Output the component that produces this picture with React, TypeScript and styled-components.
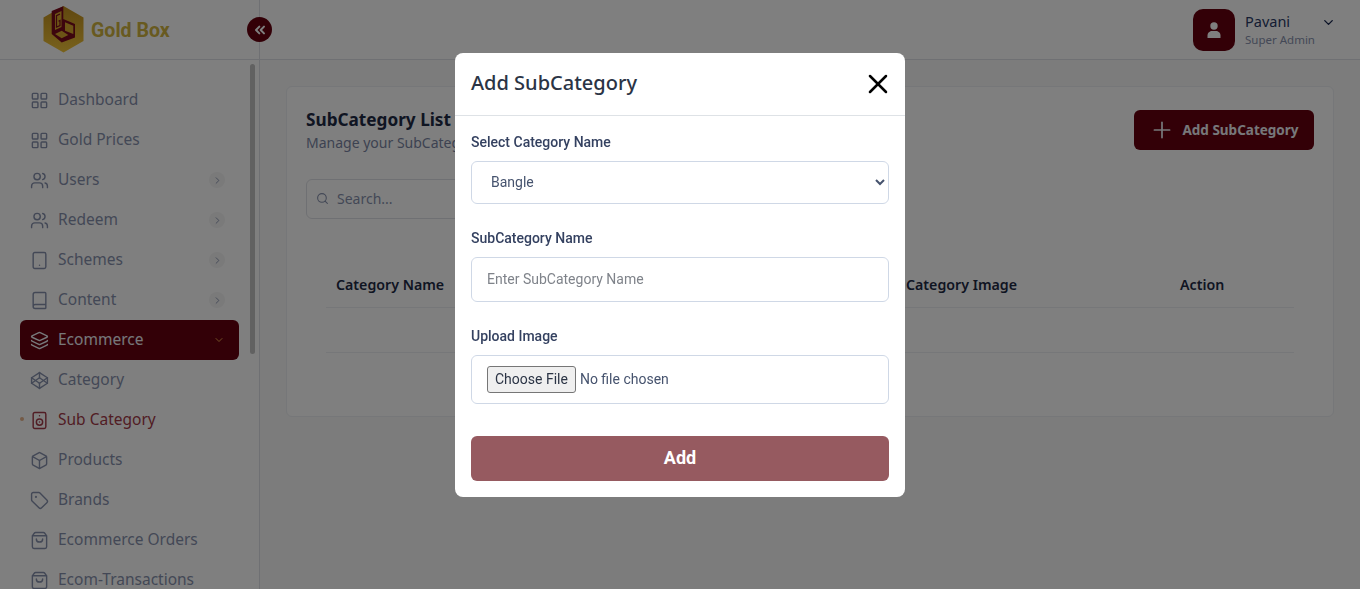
import React from 'react'
import styled, { createGlobalStyle } from 'styled-components'
import {
	Book,
	Box,
	ChevronDown,
	ChevronRight,
	ChevronsLeft,
	Codepen,
	Layers,
	LayoutGrid,
	Plus,
	Search,
	ShoppingBag,
	Speaker,
	Tablet,
	Tag,
	Users,
	X,
} from 'lucide-react'

const MAROON = `#66000f`
const NAV_TEXT = `#8791ad`
const UI_FONT = `"Noto Sans", "Open Sans", sans-serif`

const GlobalStyle = createGlobalStyle`
	html, body {
		margin: 0;
		height: 100%;
		overflow: hidden;
		background: #f8f8f8;
		font-family: ${UI_FONT};
	}
	* {
		box-sizing: border-box;
	}
`

const Page = styled.div`
	display: flex;
	height: 589px;
	overflow: hidden;
`

const Sidebar = styled.aside`
	position: relative;
	width: 260px;
	flex-shrink: 0;
	background: #fff;
	border-right: 1px solid #dfe1e6;
	display: flex;
	flex-direction: column;
`

const Brand = styled.div`
	height: 60px;
	flex-shrink: 0;
	display: flex;
	align-items: center;
	gap: 7px;
	padding-left: 43px;
	border-bottom: 1px solid #dfe1e6;
`

const BrandName = styled.span`
	margin-top: 2px;
	font-family: Roboto, sans-serif;
	font-size: 19.6px;
	font-weight: 700;
	color: #d0b440;
`

const CollapseButton = styled.button`
	position: absolute;
	top: 17px;
	left: 247px;
	width: 25px;
	height: 25px;
	padding: 0;
	border: none;
	border-radius: 50%;
	background: ${MAROON};
	color: #fff;
	display: flex;
	align-items: center;
	justify-content: center;
	z-index: 2;
`

const ScrollThumb = styled.div`
	position: absolute;
	top: 64px;
	left: 250px;
	width: 5px;
	height: 290px;
	border-radius: 3px;
	background: #c2c2c2;
`

const Nav = styled.nav`
	display: flex;
	flex-direction: column;
	padding: 20px 20px 0;
	overflow: hidden;
`

const NavItem = styled.div<{ $active?: boolean; $current?: boolean }>`
	position: relative;
	height: 40px;
	flex-shrink: 0;
	width: 219px;
	display: flex;
	align-items: center;
	gap: 9px;
	padding: 0 14px 0 10px;
	border-radius: 6px;
	font-size: 15.5px;
	background: ${({ $active }): string => ($active ? MAROON : `transparent`)};
	color: ${({ $active, $current }): string => ($active ? `#eef0f5` : $current ? `#a33a48` : NAV_TEXT)};

	${({ $current }): string =>
		$current
			? `&::before {
		content: '';
		position: absolute;
		left: 0;
		top: 17px;
		width: 4px;
		height: 4px;
		border-radius: 50%;
		background: #e8b48c;
	}`
			: ``}
`

const NavLabel = styled.span`
	flex: 1;
	margin-bottom: 2px;
	white-space: nowrap;
`

const NavArrow = styled.span`
	width: 16px;
	height: 16px;
	border-radius: 50%;
	background: #f4f4f4;
	color: ${NAV_TEXT};
	display: flex;
	align-items: center;
	justify-content: center;
`

const Main = styled.div`
	flex: 1;
	min-width: 0;
	display: flex;
	flex-direction: column;
`

const TopBar = styled.header`
	height: 60px;
	flex-shrink: 0;
	background: #fff;
	border-bottom: 1px solid #dfe1e6;
	display: flex;
	justify-content: flex-end;
	align-items: center;
	padding: 0 24px 0 0;
`

const Avatar = styled.div`
	width: 42px;
	height: 42px;
	border-radius: 10px;
	background: ${MAROON};
	display: flex;
	align-items: center;
	justify-content: center;
`

const UserInfo = styled.div`
	margin-left: 10px;
	width: 76px;
	display: flex;
	flex-direction: column;
`

const UserName = styled.span`
	font-size: 14.5px;
	line-height: 19px;
	color: #2a3a66;
`

const UserRole = styled.span`
	font-size: 11.5px;
	line-height: 16px;
	margin-top: 1px;
	color: #8791ad;
	white-space: nowrap;
`

const UserCaret = styled.span`
	align-self: flex-start;
	margin-top: 15px;
	color: #17264f;
	display: flex;
`

const Content = styled.main`
	padding: 26px;
`

const Card = styled.section`
	height: 331px;
	background: #fff;
	border: 1px solid #eceef2;
	border-radius: 6px;
	padding: 23px 19px 0 19px;
`

const CardHead = styled.div`
	display: flex;
	justify-content: space-between;
	align-items: flex-start;
`

const CardTitle = styled.h2`
	margin: 0;
	font-size: 17.2px;
	line-height: 20px;
	font-weight: 700;
	color: #1e2a45;
`

const CardSubtitle = styled.p`
	margin: 4px 0 0;
	font-size: 14px;
	line-height: 18px;
	color: #7a85a3;
`

const AddButton = styled.button`
	width: 180px;
	height: 40px;
	border: none;
	border-radius: 6px;
	background: ${MAROON};
	color: #eef0f5;
	font-family: ${UI_FONT};
	font-size: 13.5px;
	font-weight: 700;
	display: flex;
	align-items: center;
	justify-content: center;
	gap: 7px;
`

const SearchBox = styled.div`
	margin-top: 27px;
	width: 280px;
	height: 40px;
	border: 1px solid #dfe1e6;
	border-radius: 6px;
	display: flex;
	align-items: center;
	gap: 8px;
	padding: 0 9px 1px;
	font-size: 14px;
	color: #8791ad;
`

const Table = styled.div`
	margin: 43px 20px 0;
`

const TableHead = styled.div`
	height: 46px;
	display: grid;
	grid-template-columns: 285px 285px 274px 1fr;
	align-items: center;
	padding: 0 0 1px 10px;
	font-size: 14.2px;
	font-weight: 600;
	color: #1e2a45;
	border-bottom: 1px solid #eceef2;
`

const TableEmpty = styled.div`
	height: 45px;
	border-bottom: 1px solid #eceef2;
`

const Overlay = styled.div`
	position: fixed;
	inset: 0;
	z-index: 10;
	background: rgba(0, 0, 0, 0.5);
`

const Modal = styled.div`
	position: absolute;
	top: 53px;
	left: 455px;
	width: 450px;
	height: 444px;
	background: #fff;
	border-radius: 8px;
	display: flex;
	flex-direction: column;
`

const ModalHeader = styled.div`
	height: 63px;
	flex-shrink: 0;
	border-bottom: 1px solid #dee2e6;
	display: flex;
	align-items: center;
	justify-content: space-between;
	padding: 0 11px 0 16px;
`

const ModalTitle = styled.h3`
	margin: 0 0 3px;
	font-size: 20px;
	font-weight: 500;
	color: #2b3445;
`

const CloseButton = styled.button`
	padding: 0;
	border: none;
	background: none;
	color: #000;
	display: flex;
`

const Form = styled.form`
	padding: 16px 16px 0;
	display: flex;
	flex-direction: column;
	font-family: Roboto, sans-serif;
`

const Field = styled.div`
	margin-bottom: 24px;
	display: flex;
	flex-direction: column;
`

const Label = styled.label`
	font-size: 14px;
	line-height: 20px;
	font-weight: 500;
	color: #344160;
	margin-bottom: 9px;
`

const Select = styled.select`
	height: 43px;
	padding: 0 15px 2px;
	border: 1px solid #cfd8e6;
	border-radius: 6px;
	background: #fff;
	font-family: Roboto, sans-serif;
	font-size: 14px;
	color: #46536e;
`

const TextInput = styled.input`
	height: 45px;
	padding: 0 15px 2px;
	border: 1px solid #cfd8e6;
	border-radius: 6px;
	font-family: Roboto, sans-serif;
	font-size: 14px;

	&::placeholder {
		color: #7f838a;
	}
`

const FileInput = styled.input`
	height: 49px;
	padding: 10px 15px;
	border: 1px solid #cfd8e6;
	border-radius: 6px;
	font-family: Roboto, sans-serif;
	font-size: 14px;
	line-height: 25px;
	color: #46536e;

	&::file-selector-button {
		height: 27px;
		margin-right: 4px;
		padding: 0 7px 2px;
		border: 1px solid #767676;
		border-radius: 3px;
		background: #efefef;
		font-family: Roboto, sans-serif;
		font-size: 14px;
		color: #2b3445;
	}
`

const SubmitButton = styled.button`
	margin-top: 8px;
	height: 45px;
	padding: 0 0 2px;
	border: none;
	border-radius: 6px;
	background: #965a60;
	color: #fff;
	font-family: Roboto, sans-serif;
	font-size: 18px;
	font-weight: 700;
`

const LogoMark: React.FC = () => (
	<svg width="41" height="47" viewBox="0 0 41 47" aria-hidden="true">
		<defs>
			<linearGradient id="goldFill" x1="0" y1="0" x2="0" y2="1">
				<stop offset="0" stopColor="#c08f1e" />
				<stop offset="1" stopColor="#f2c53a" />
			</linearGradient>
		</defs>
		<path d="M20.5 0 40.5 11.5V35L20.5 46.5.5 35V11.5Z" fill="url(#goldFill)" />
		<path d="M8.700 5 20.300.3V13L32 18V31.500L18.700 36.500 8.700 28Z" fill="#7a0a1c" />
		<path d="M12 8 18.500 5V21L12 24Z" fill="#d8a82c" />
		<path d="M17 8 13.500 9.600V21L17 19.500V14.500L15.500 15.200" fill="none" stroke="#7a0a1c" strokeWidth="1.200" />
		<path d="M22 16.300 30.300 19.700V28L22 24.700Z" fill="#d8a82c" />
		<path d="M12 28 18.700 24.700 25.300 29 18.700 32.300Z" fill="#d8a82c" />
	</svg>
)

const UserGlyph: React.FC = () => (
	<svg width="16" height="16" viewBox="0 0 16 16" fill="#fff" aria-hidden="true">
		<circle cx="8" cy="4" r="3.7" />
		<path d="M1.500 16v-2.500C1.500 10.600 4 9 6 9h4c2 0 4.500 1.600 4.500 4.500V16Z" />
	</svg>
)

type NavEntry = {
	label: string
	icon: React.ElementType
	arrow?: boolean
	active?: boolean
	current?: boolean
}

const NAV_ITEMS: NavEntry[] = [
	{ label: `Dashboard`, icon: LayoutGrid },
	{ label: `Gold Prices`, icon: LayoutGrid },
	{ label: `Users`, icon: Users, arrow: true },
	{ label: `Redeem`, icon: Users, arrow: true },
	{ label: `Schemes`, icon: Tablet, arrow: true },
	{ label: `Content`, icon: Book, arrow: true },
	{ label: `Ecommerce`, icon: Layers, active: true },
	{ label: `Category`, icon: Codepen },
	{ label: `Sub Category`, icon: Speaker, current: true },
	{ label: `Products`, icon: Box },
	{ label: `Brands`, icon: Tag },
	{ label: `Ecommerce Orders`, icon: ShoppingBag },
	{ label: `Ecom-Transactions`, icon: ShoppingBag },
]

const App: React.FC = () => (
	<>
		<GlobalStyle />
		<Page>
			<Sidebar>
				<Brand>
					<LogoMark />
					<BrandName>Gold Box</BrandName>
				</Brand>
				<CollapseButton type="button">
					<ChevronsLeft size={16} strokeWidth={3} />
				</CollapseButton>
				<ScrollThumb />
				<Nav>
					{NAV_ITEMS.map(({ label, icon: Icon, arrow, active, current }) => (
						<NavItem key={label} $active={active} $current={current}>
							<Icon size={19} strokeWidth={1.8} />
							<NavLabel>{label}</NavLabel>
							{arrow && (
								<NavArrow>
									<ChevronRight size={11} />
								</NavArrow>
							)}
							{active && <ChevronDown size={12} color="#e8a04c" />}
						</NavItem>
					))}
				</Nav>
			</Sidebar>
			<Main>
				<TopBar>
					<Avatar>
						<UserGlyph />
					</Avatar>
					<UserInfo>
						<UserName>Pavani</UserName>
						<UserRole>Super Admin</UserRole>
					</UserInfo>
					<UserCaret>
						<ChevronDown size={15} strokeWidth={2.2} />
					</UserCaret>
				</TopBar>
				<Content>
					<Card>
						<CardHead>
							<div>
								<CardTitle>SubCategory List</CardTitle>
								<CardSubtitle>Manage your SubCategory</CardSubtitle>
							</div>
							<AddButton type="button">
								<Plus size={26} strokeWidth={1.6} />
								Add SubCategory
							</AddButton>
						</CardHead>
						<SearchBox>
							<Search size={13} />
							Search...
						</SearchBox>
						<Table>
							<TableHead>
								<span>Category Name</span>
								<span>SubCategory Name</span>
								<span>Category Image</span>
								<span>Action</span>
							</TableHead>
							<TableEmpty />
						</Table>
					</Card>
				</Content>
			</Main>
			<Overlay>
				<Modal>
					<ModalHeader>
						<ModalTitle>Add SubCategory</ModalTitle>
						<CloseButton type="button">
							<X size={32} strokeWidth={1.9} />
						</CloseButton>
					</ModalHeader>
					<Form>
						<Field>
							<Label>Select Category Name</Label>
							<Select defaultValue="Bangle">
								<option>Bangle</option>
							</Select>
						</Field>
						<Field>
							<Label>SubCategory Name</Label>
							<TextInput placeholder="Enter SubCategory Name" />
						</Field>
						<Field>
							<Label>Upload Image</Label>
							<FileInput type="file" />
						</Field>
						<SubmitButton type="button">Add</SubmitButton>
					</Form>
				</Modal>
			</Overlay>
		</Page>
	</>
)

export default App
